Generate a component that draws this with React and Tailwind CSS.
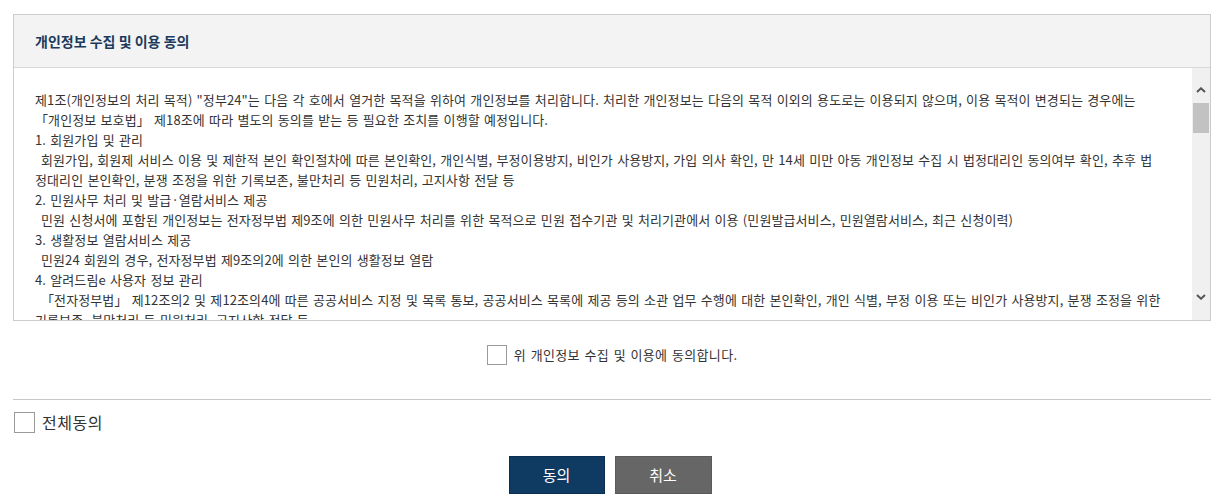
const LINES = [
  { t: '제1조(개인정보의 처리 목적) "정부24"는 다음 각 호에서 열거한 목적을 위하여 개인정보를 처리합니다. 처리한 개인정보는 다음의 목적 이외의 용도로는 이용되지 않으며, 이용 목적이 변경되는 경우에는' },
  { t: '「개인정보 보호법」 제18조에 따라 별도의 동의를 받는 등 필요한 조치를 이행할 예정입니다.' },
  { t: '1. 회원가입 및 관리' },
  { t: '회원가입, 회원제 서비스 이용 및 제한적 본인 확인절차에 따른 본인확인, 개인식별, 부정이용방지, 비인가 사용방지, 가입 의사 확인, 만 14세 미만 아동 개인정보 수집 시 법정대리인 동의여부 확인, 추후 법', indent: true },
  { t: '정대리인 본인확인, 분쟁 조정을 위한 기록보존, 불만처리 등 민원처리, 고지사항 전달 등' },
  { t: '2. 민원사무 처리 및 발급·열람서비스 제공' },
  { t: '민원 신청서에 포함된 개인정보는 전자정부법 제9조에 의한 민원사무 처리를 위한 목적으로 민원 접수기관 및 처리기관에서 이용 (민원발급서비스, 민원열람서비스, 최근 신청이력)', indent: true },
  { t: '3. 생활정보 열람서비스 제공' },
  { t: '민원24 회원의 경우, 전자정부법 제9조의2에 의한 본인의 생활정보 열람', indent: true },
  { t: '4. 알려드림e 사용자 정보 관리' },
  { t: '「전자정부법」 제12조의2 및 제12조의4에 따른 공공서비스 지정 및 목록 통보, 공공서비스 목록에 제공 등의 소관 업무 수행에 대한 본인확인, 개인 식별, 부정 이용 또는 비인가 사용방지, 분쟁 조정을 위한', indent: true },
  { t: '기록보존, 불만처리 등 민원처리, 고지사항 전달 등' },
];

function Chevron({ up }) {
  return (
    <svg width="10" height="6" viewBox="0 0 10 6" className="block">
      <polyline
        points={up ? "1,5 5,1.3 9,5" : "1,1 5,4.7 9,1"}
        fill="none"
        stroke="#555555"
        strokeWidth="2"
      />
    </svg>
  );
}

function Checkbox({ size = "w-[20px] h-[20px]" }) {
  return <span className={`${size} shrink-0 border border-[#9a9a9a] bg-white`} />;
}

export default function App() {
  return (
    <div
      className="h-[503px] w-[1232px] overflow-hidden bg-white pl-[13px] pt-[14px] text-[#333333]"
      style={{ fontFamily: '"Noto Sans CJK KR", "Liberation Sans", sans-serif' }}
    >
      <div className="w-[1198px]">
        <section className="border border-[#cccccc]">
          <div className="flex h-[53px] items-center border-b border-[#d6d6d6] bg-[#f3f3f3] pl-[21px]">
            <h2 className="text-[14px] font-bold text-[#1c3a5c]">개인정보 수집 및 이용 동의</h2>
          </div>
          <div className="flex h-[252px]">
            <div className="flex-1 overflow-hidden pl-[21px] pt-[22px] text-[13px] leading-[20px] tracking-[0.1px] [word-spacing:1.2px]">
              {LINES.map((l, i) => (
                <p key={i} className={`whitespace-nowrap ${l.indent ? "pl-[6px]" : ""}`}>
                  {l.t}
                </p>
              ))}
            </div>
            <div className="flex w-[18px] flex-col bg-[#f0f0f0]">
              <div className="flex h-[35px] items-center justify-center pt-[9px]">
                <Chevron up />
              </div>
              <div className="mx-[1px] h-[30px] bg-[#c2c2c2]" />
              <div className="flex-1" />
              <div className="flex h-[35px] items-center justify-center pb-[12px]">
                <Chevron />
              </div>
            </div>
          </div>
        </section>

        <label className="mt-[24px] flex items-center justify-center gap-[7px] text-[13px] tracking-[0.3px] [word-spacing:1.5px]">
          <Checkbox />
          <span>위 개인정보 수집 및 이용에 동의합니다.</span>
        </label>

        <div className="mt-[34px] h-px bg-[#c8c8c8]" />

        <label className="mt-[10px] flex items-center gap-[7px] pl-[1px] text-[16px] tracking-[0.5px]">
          <Checkbox size="w-[21px] h-[21px]" />
          <span>전체동의</span>
        </label>

        <div className="mt-[22px] flex justify-center gap-[10px] pr-[4px]">
          <button className="h-[38px] w-[96px] border border-[#0a2f52] bg-[#0f3a62] text-[15px] text-white">동의</button>
          <button className="h-[38px] w-[97px] border border-[#5a5a5a] bg-[#666666] text-[15px] text-white">취소</button>
        </div>
      </div>
    </div>
  );
}
